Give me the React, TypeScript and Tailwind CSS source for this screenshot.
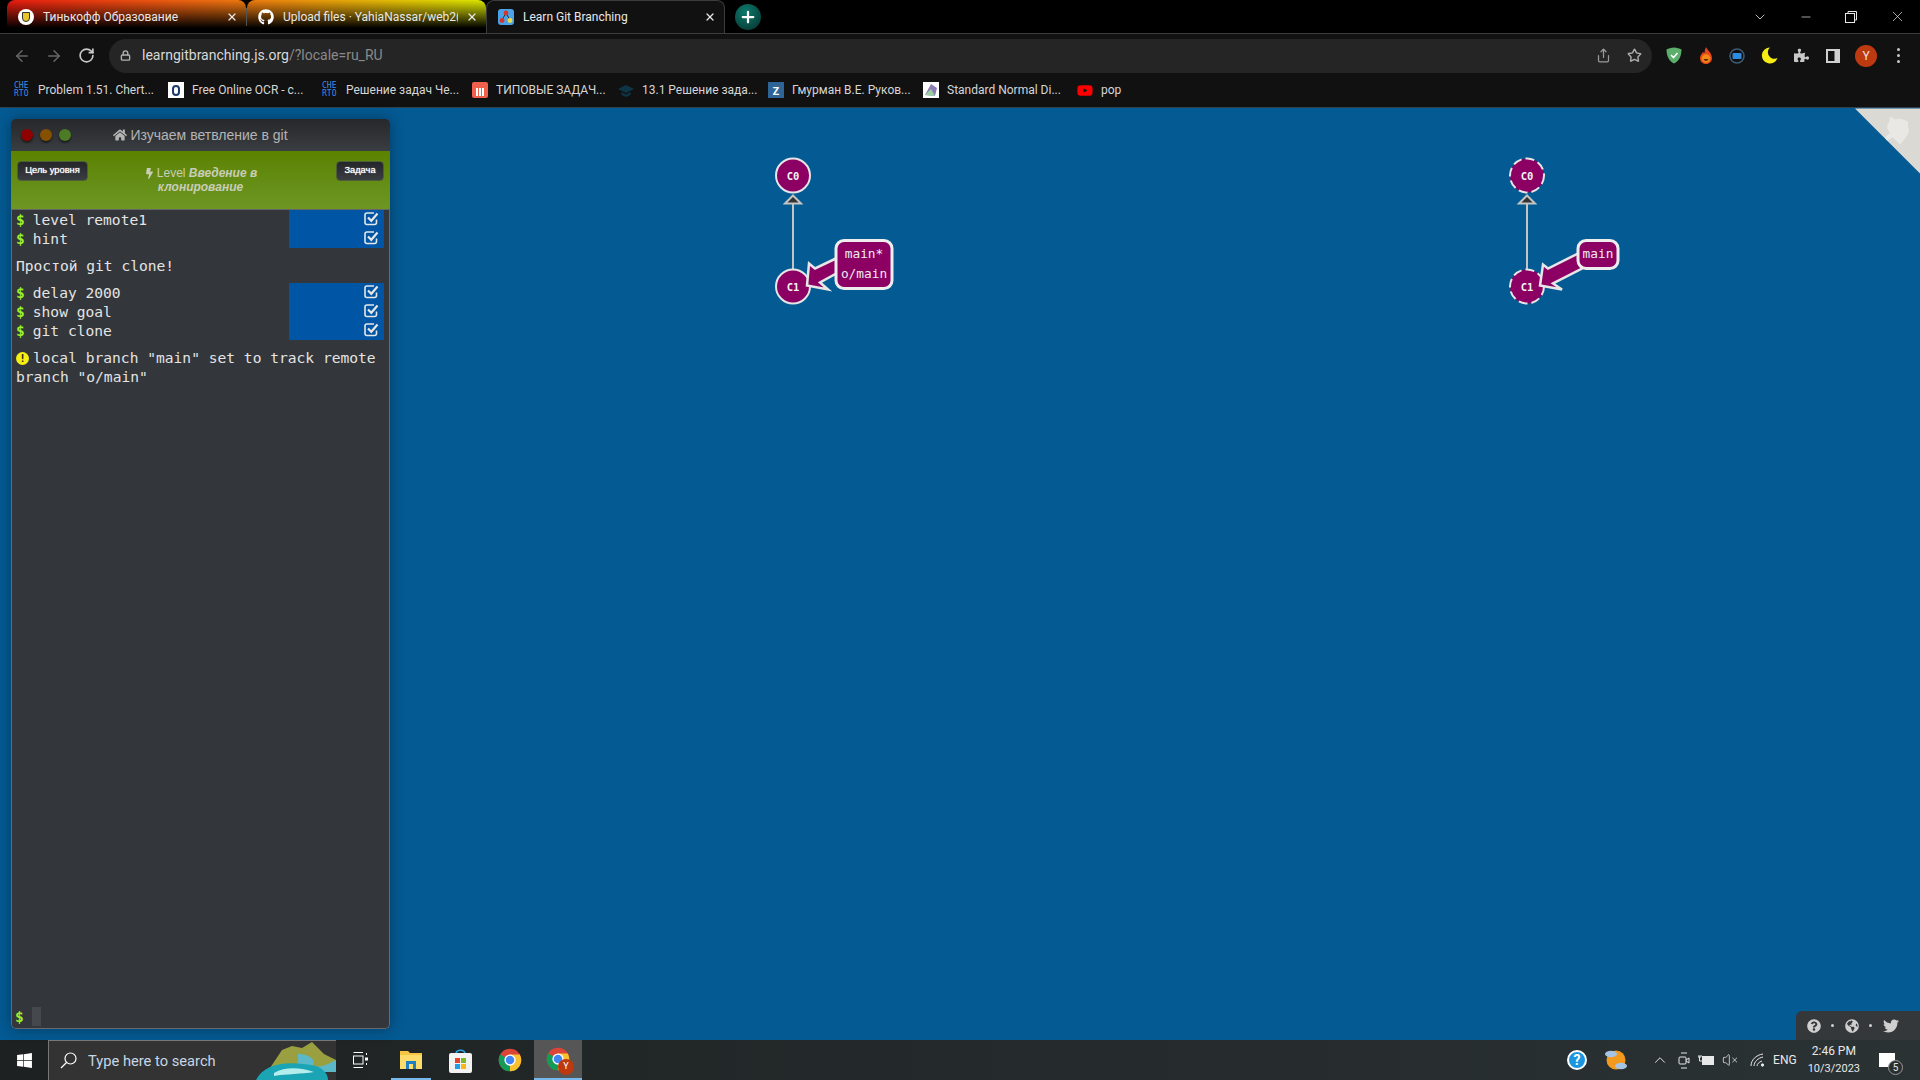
import React from "react";
import { FaBolt, FaGithub, FaGlobeAmericas, FaHome, FaPuzzlePiece, FaQuestionCircle, FaTwitter, FaWindows, FaYoutube } from "react-icons/fa";
import { ArrowLeft, ArrowRight, ChevronDown, ChevronUp, Lock, Minus, Plus, RotateCw, Share, Star, VolumeX, X } from "lucide-react";

const ui = "font-['Roboto','Noto_Sans',sans-serif]";
const mono = "font-['DejaVu_Sans_Mono',monospace]";

const ChromeLogo = ({ size = 30 }: { size?: number }) => (
  <svg width={size} height={size} viewBox="0 0 32 32">
    <circle cx="16" cy="16" r="15" fill="#db4437" />
    <path d="M16 16 L3 23.5 A15 15 0 0 1 3 8.5 Z" fill="#0f9d58" />
    <path d="M16 16 L3 23.5 A15 15 0 0 0 16 31 A15 15 0 0 0 29 23.5 Z" fill="#0f9d58" />
    <path d="M16 16 L16 31 A15 15 0 0 0 31 16 A15 15 0 0 0 29 8.5 L16 8.5 Z" fill="#fbc02d" />
    <circle cx="16" cy="16" r="7.5" fill="#fff" />
    <circle cx="16" cy="16" r="5.7" fill="#4285f4" />
  </svg>
);

const CherIcon = () => (
  <span className={`flex w-4 h-4 flex-col text-[8px] leading-[8px] text-[#3b8ce0] ${mono}`}>
    <span>CHE</span>
    <span>RTO</span>
  </span>
);

const CheckBox = () => (
  <svg width="15" height="15" viewBox="0 0 15 15" fill="none" stroke="#e6e6e6">
    <path d="M12.5 8.5 V11.5 A2 2 0 0 1 10.5 13.5 H3 A2 2 0 0 1 1 11.5 V4 A2 2 0 0 1 3 2 H10" strokeWidth="1.6" />
    <path d="M4 6.5 L7.3 9.8 L13.5 2.5" strokeWidth="2.2" />
  </svg>
);

const Tab = ({ title, icon, bg, active }: { title: string; icon: React.ReactNode; bg: string; active?: boolean }) => (
  <div className={`flex w-[239px] h-[33px] shrink-0 items-center rounded-t-[8px] pl-[11px] pr-[8px] ${bg} ${active ? "border border-b-0 border-[#3c3c3c]" : ""}`}>
    <span className="flex w-4 h-4 shrink-0 items-center justify-center">{icon}</span>
    <span className={`ml-[9px] flex-1 overflow-hidden whitespace-nowrap text-[12px] text-[#e8e8e8] ${ui}`}>{title}</span>
    <X size={12} strokeWidth={2.5} className="ml-2 shrink-0 text-[#e8e8e8]" />
  </div>
);

const bookmarks: { label: string; icon: React.ReactNode; w: string }[] = [
  { label: "Problem 1.51. Chert...", icon: <CherIcon />, w: "w-[154px]" },
  { label: "Free Online OCR - с...", icon: <span className="flex w-4 h-4 items-center justify-center bg-white"><span className="w-[8px] h-[11px] rounded-full border-2 border-[#1d3a6e]" /></span>, w: "w-[154px]" },
  { label: "Решение задач Че...", icon: <CherIcon />, w: "w-[150px]" },
  { label: "ТИПОВЫЕ ЗАДАЧ...", icon: <span className="flex w-4 h-4 items-end justify-center gap-px rounded-[2px] bg-[#f0604c] pb-[2px]"><span className="w-[2px] h-[8px] bg-white" /><span className="w-[2px] h-[8px] bg-white" /><span className="w-[2px] h-[8px] bg-white" /></span>, w: "w-[146px]" },
  { label: "13.1 Решение зада...", icon: <svg width="16" height="16" viewBox="0 0 16 16"><path d="M8 3 L16 7 L8 11 L0 7 Z M3.5 10 L8 12.5 L12.5 10 L12.5 13 L8 15 L3.5 13 Z" fill="#0e3446" /></svg>, w: "w-[150px]" },
  { label: "Гмурман В.Е. Руков...", icon: <span className="flex w-4 h-4 items-center justify-center bg-[#2f6496] text-[11px] font-bold leading-none text-white">Z</span>, w: "w-[155px]" },
  { label: "Standard Normal Di...", icon: <svg width="16" height="16" viewBox="0 0 16 16"><rect width="16" height="16" fill="#fff" /><path d="M2 13 L8 2 L14 6 L12 14 Z" fill="#8d7fb5" /><path d="M2 13 L8 7 L12 14 Z" fill="#9ad0a4" /></svg>, w: "w-[154px]" },
  { label: "pop", icon: <FaYoutube size={17} className="text-[#f00]" />, w: "" },
];

const TitleBar = () => (
  <div className="flex h-[33px] items-center bg-black pl-[7px]">
    <Tab title="Тинькофф Образование" bg="bg-[linear-gradient(to_bottom,transparent,#000_85%),linear-gradient(to_right,#e81c10,#ee7a10)]"
      icon={<span className="flex w-4 h-4 items-center justify-center rounded-full bg-white"><span className="w-[8px] h-[10px] rounded-b-full bg-[#e8c42a] border border-[#333]" /></span>} />
    <span className="w-px h-[18px] bg-[#555] shrink-0" />
    <Tab title="Upload files · YahiaNassar/web2(" bg="bg-[linear-gradient(to_bottom,transparent,#000_85%),linear-gradient(to_right,#ee7a10,#dbe800)]"
      icon={<FaGithub size={16} className="text-white" />} />
    <Tab title="Learn Git Branching" bg="bg-[#111]" active
      icon={<svg width="16" height="16" viewBox="0 0 16 16"><rect width="16" height="16" rx="3" fill="#4aa3e8" /><path d="M8 4 L4 11 M8 4 L12 11" stroke="#333" strokeWidth="1" /><circle cx="8" cy="4" r="2.4" fill="#d8352a" /><circle cx="4" cy="11.5" r="2.4" fill="#d8352a" /><circle cx="12" cy="11.5" r="2.4" fill="#f2dc3c" /></svg>} />
    <span className="ml-[10px] flex w-[26px] h-[26px] items-center justify-center rounded-full bg-[radial-gradient(circle_at_40%_30%,#0c7a6c,#06302c)]">
      <Plus size={18} strokeWidth={3} className="text-white" />
    </span>
    <div className="ml-auto flex items-center text-[#e8e8e8]">
      <ChevronDown size={16} strokeWidth={1.2} className="mr-[31px]" />
      <Minus size={14} strokeWidth={1.2} className="mr-[32px]" />
      <svg width="12" height="12" viewBox="0 0 12 12" fill="none" stroke="currentColor" className="mr-[32px]"><rect x="0.5" y="2.5" width="9" height="9" /><path d="M3 2.5 V0.5 H11.5 V9 H9.5" /></svg>
      <X size={17} strokeWidth={1} className="mr-[14px]" />
    </div>
  </div>
);

const Toolbar = () => (
  <div className="flex h-[44px] items-center border-t border-[#3c3c3c] bg-[#111] pl-[13px]">
    <ArrowLeft size={18} className="text-[#666]" />
    <ArrowRight size={18} className="ml-[14px] text-[#666]" />
    <RotateCw size={17} strokeWidth={2.4} className="ml-[15px] text-[#c8c8c8]" />
    <div className="ml-[14px] flex w-[1543px] h-[34px] items-center rounded-full bg-[#252525] pl-[11px]">
      <Lock size={11} strokeWidth={3} className="text-[#b0b0b0]" />
      <span className={`ml-[11px] text-[14px] text-[#d8d8d8] ${ui}`}>learngitbranching.js.org<span className="text-[#8a8a8a]">/?locale=ru_RU</span></span>
      <Share size={15} className="ml-auto text-[#9a9a9a]" />
      <Star size={15} strokeWidth={2.2} className="ml-[16px] mr-[10px] text-[#b0b0b0]" />
    </div>
    <div className="ml-[14px] flex items-center">
      <svg width="16" height="17" viewBox="0 0 16 17"><path d="M8 0.5 C5 0.5 2.5 1.5 0.5 2.5 C0.5 9 3 14 8 16.5 C13 14 15.5 9 15.5 2.5 C13.5 1.5 11 0.5 8 0.5 Z" fill="#5cae6b" /><path d="M5 8 L7.5 10.5 L11.5 6" stroke="#fff" strokeWidth="1.6" fill="none" /></svg>
      <svg width="14" height="17" viewBox="0 0 14 17" className="ml-[17px]"><path d="M7 0 C8 3 13 6 13 11 C13 14.5 10.5 17 7 17 C3.5 17 1 14.5 1 11 C1 8 3 7 4 5 C5 6 5.5 6 5.5 6 C5.5 4 6 2 7 0 Z" fill="#e8471a" /><circle cx="7" cy="11.5" r="4.3" fill="#f08a18" /><path d="M4.5 12 A2.6 2.6 0 0 0 9.5 12 Z" fill="#6a2a0a" /></svg>
      <svg width="16" height="16" viewBox="0 0 16 16" fill="none" className="ml-[16px]"><circle cx="8" cy="8" r="7" stroke="#3f5a72" strokeWidth="1.5" /><rect x="3.5" y="5" width="9" height="6" rx="1" fill="#2f8be0" /></svg>
      <svg width="17" height="17" viewBox="0 0 17 17" className="ml-[16px]"><path d="M9 0.5 A8 8 0 1 0 16.5 11 A6.5 6.5 0 0 1 9 0.5 Z" fill="#f6ec14" /></svg>
      <FaPuzzlePiece size={15} className="ml-[16px] text-[#c8c8c8]" />
      <svg width="14" height="14" viewBox="0 0 14 14" className="ml-[17px]"><rect width="14" height="14" fill="#d0d0d0" /><rect x="2" y="2" width="6.5" height="10" fill="#111" /></svg>
      <span className={`ml-[15px] flex w-[22px] h-[22px] items-center justify-center rounded-full bg-[#bd3a10] text-[12px] text-[#f0e0d8] ${ui}`}>Y</span>
      <span className="ml-[20px] flex flex-col gap-[3px]">
        <span className="w-[3px] h-[3px] rounded-full bg-[#c8c8c8]" />
        <span className="w-[3px] h-[3px] rounded-full bg-[#c8c8c8]" />
        <span className="w-[3px] h-[3px] rounded-full bg-[#c8c8c8]" />
      </span>
    </div>
  </div>
);

const BookmarksBar = () => (
  <div className="flex h-[31px] items-center border-b border-[#30404c] bg-[#111] pb-[4px] pl-[14px]">
    {bookmarks.map((b) => (
      <div key={b.label} className={`flex items-center gap-[8px] whitespace-nowrap ${b.w}`}>
        <span className="flex w-4 h-4 shrink-0 items-center justify-center">{b.icon}</span>
        <span className={`text-[12px] text-[#d6d6d6] ${ui}`}>{b.label}</span>
      </div>
    ))}
  </div>
);

const Cmd = ({ text }: { text: string }) => (
  <div className="flex h-[19px] items-center pl-[4px]">
    <span className="font-bold text-[#9bf02c]">$</span>
    <span className="ml-[8px] flex-1 whitespace-nowrap">{text}</span>
    <span className="flex w-[95px] h-[19px] items-center justify-end bg-[#0056a5] pb-[2px] pr-[5px]">
      <CheckBox />
    </span>
  </div>
);

const Terminal = () => (
  <div className="flex w-[379px] h-[910px] shrink-0 flex-col overflow-hidden rounded-[5px] shadow-[0_0_14px_rgba(0,0,0,0.35)]">
    <div className="relative flex h-[32px] items-center justify-center bg-gradient-to-b from-[#26282b] to-[#3a3d41]">
      <div className="absolute left-[10px] top-[10px] flex gap-[7px]">
        <span className="w-[12px] h-[12px] rounded-full bg-[#8f0000] shadow-[0_2px_2px_rgba(0,0,0,0.5)]" />
        <span className="w-[12px] h-[12px] rounded-full bg-[#855000] shadow-[0_2px_2px_rgba(0,0,0,0.5)]" />
        <span className="w-[12px] h-[12px] rounded-full bg-[#4c7a25] shadow-[0_2px_2px_rgba(0,0,0,0.5)]" />
      </div>
      <span className="flex items-center gap-[3px] font-['Liberation_Sans',sans-serif] text-[14px] text-[#b4b4b4]">
        <FaHome size={14} />Изучаем ветвление в git
      </span>
    </div>
    <div className="grid h-[58px] grid-cols-[1fr_190px_1fr] items-start bg-gradient-to-b from-[#5c8200] to-[#6c9722] px-[6px] pt-[10px] font-['Liberation_Sans',sans-serif]">
      <span className="flex h-[20px] w-[71px] items-center justify-center rounded-[4px] border border-[#4c5f38] bg-gradient-to-b from-[#24262a] to-[#3a3d42] text-[9.3px] text-white [text-shadow:0_0_1px_#fff]">Цель уровня</span>
      <span className="mt-[5px] text-center text-[12px] font-bold leading-[14px] text-[#c9cdb8]">
        <FaBolt size={11} className="mr-[2px] inline" /><span className="font-normal">Level</span> <em>Введение в клонирование</em>
      </span>
      <span className="flex h-[20px] w-[48px] items-center justify-center justify-self-end rounded-[4px] border border-[#4c5f38] bg-gradient-to-b from-[#24262a] to-[#3a3d42] text-[9.3px] text-white [text-shadow:0_0_1px_#fff]">Задача</span>
    </div>
    <div className={`flex flex-1 flex-col rounded-b-[5px] border border-t-[#666] border-[#6a6a6a] bg-[#33363a] text-[14.6px] leading-[19px] text-[#e4e4e4] ${mono}`}>
      <div className="pr-[5px]">
        <Cmd text="level remote1" />
        <Cmd text="hint" />
      </div>
      <p className="mt-[8px] pl-[4px]">Простой git clone!</p>
      <div className="mt-[8px] pr-[5px]">
        <Cmd text="delay 2000" />
        <Cmd text="show goal" />
        <Cmd text="git clone" />
      </div>
      <p className="mt-[8px] pl-[4px]">
        <span className="relative top-[-1px] mr-[4px] inline-flex w-[13px] h-[13px] items-center justify-center rounded-full bg-[#f6ef14] align-middle text-[11px] font-bold leading-none text-[#222]">!</span>
        local branch "main" set to track remote branch "o/main"
      </p>
      <div className="mt-auto flex items-center pb-[2px] pl-[3px]">
        <span className="font-bold text-[#9bf02c]">$</span>
        <span className="ml-[8px] w-[9px] h-[19px] bg-[#45484c]" />
      </div>
    </div>
  </div>
);

const Node = ({ x, y, label, dashed }: { x: number; y: number; label: string; dashed?: boolean }) => (
  <g>
    <circle cx={x} cy={y} r={17} fill="#8c0064" stroke="#e6e6e6" strokeWidth={2} strokeDasharray={dashed ? "9 4" : undefined} />
    <text x={x} y={y + 4} textAnchor="middle" fontFamily="DejaVu Sans Mono, monospace" fontWeight="bold" fontSize="10.5" fill="#f2f2f2">{label}</text>
  </g>
);

const Edge = ({ x }: { x: number }) => (
  <g>
    <line x1={x} y1={203} x2={x} y2={270} stroke="#c4c4c4" strokeWidth={2} />
    <path d={`M${x} 195 L${x + 8} 203 L${x - 8} 203 Z`} fill="#333" stroke="#c4c4c4" strokeWidth={2} />
  </g>
);

// svg sits on top of the blue area, so y is page y minus the 108px browser chrome
const Graph = () => (
  <svg className="absolute inset-0" width="1920" height="932" viewBox="0 107.5 1920 932">
    <Edge x={793} />
    <Node x={793} y={175} label="C0" />
    <Node x={793} y={286} label="C1" />
    <path d="M838 257 L815 268 L809 263 L807 285 L828 289 L820 282 L838 272 Z" fill="#8c0064" stroke="#e6e6e6" strokeWidth={2.5} />
    <rect x="836" y="240" width="56" height="48" rx="8" fill="#8c0064" stroke="#ededed" strokeWidth={3} />
    <text x="864" y="257.5" textAnchor="middle" fontFamily="DejaVu Sans Mono, monospace" fontSize="12.8" fill="#ececec">main*</text>
    <text x="864" y="277.5" textAnchor="middle" fontFamily="DejaVu Sans Mono, monospace" fontSize="12.8" fill="#ececec">o/main</text>

    <Edge x={1527} />
    <Node x={1527} y={175} label="C0" dashed />
    <Node x={1527} y={286} label="C1" dashed />
    <path d="M1580 252 L1548 268 L1543 264 L1540 285 L1562 289 L1553 283 L1582 268 Z" fill="#8c0064" stroke="#e6e6e6" strokeWidth={2.5} />
    <rect x="1578" y="240" width="40" height="28" rx="8" fill="#8c0064" stroke="#ededed" strokeWidth={3} />
    <text x="1598" y="257.5" textAnchor="middle" fontFamily="DejaVu Sans Mono, monospace" fontSize="12.8" fill="#ececec">main</text>

    <path d="M1855 108 H1920 V173 Z" fill="#dbd9d4" />
    <path d="M1890 132 C1886 128 1887 124 1889 122 L1890 116 L1895 119 C1898 118 1901 118 1903 119 L1908 121 L1908 126 C1910 130 1908 135 1905 138 L1900 144 L1893 137 L1887 140 L1885 137 Z" fill="#e9e8e4" />
  </svg>
);

const HelpBar = () => (
  <div className="absolute bottom-0 right-0 flex h-[29px] w-[124px] items-center rounded-tl-[6px] bg-[#35383b] pl-[11px] text-[#cfcfcf]">
    <FaQuestionCircle size={14} />
    <span className="ml-[10px] w-[3px] h-[3px] rounded-full bg-[#cfcfcf]" />
    <FaGlobeAmericas size={14} className="ml-[11px]" />
    <span className="ml-[10px] w-[3px] h-[3px] rounded-full bg-[#cfcfcf]" />
    <FaTwitter size={16} className="ml-[11px]" />
  </div>
);

const Taskbar = () => (
  <div className={`flex h-[40px] items-stretch bg-gradient-to-r from-[#1d2122] to-[#2b3233] ${ui}`}>
    <span className="flex w-[48px] items-center justify-center">
      <FaWindows size={17} className="text-white" />
    </span>
    <div className="relative flex w-[288px] items-center overflow-hidden border-l border-t border-[#777] bg-[#333] pl-[11px]">
      <svg width="17" height="17" viewBox="0 0 17 17" fill="none" stroke="#fff" strokeWidth="1.2"><circle cx="10.5" cy="6.5" r="5.5" /><path d="M6.5 10.5 L1 16" /></svg>
      <span className="ml-[11px] pt-[1px] text-[14.7px] text-[#c6d6e6]">Type here to search</span>
      <svg width="80" height="40" viewBox="0 0 80 40" className="absolute bottom-0 right-0">
        <path d="M14 28 L26 10 L36 6 L46 8 L56 2 L68 14 L80 20 V30 H20 Z" fill="#9aa040" />
        <path d="M42 14 C52 14 62 20 56 26 C66 28 72 24 80 20 V32 H42 Z" fill="#5ab8c8" />
        <path d="M0 40 C8 24 30 20 60 26 C70 30 72 36 72 40 Z" fill="#1aa4b4" />
        <path d="M18 33 C30 26 46 28 58 32 C46 34 30 34 18 36 Z" fill="#b5ecec" />
      </svg>
    </div>
    <span className="flex w-[48px] items-center justify-center">
      <svg width="16" height="16" viewBox="0 0 16 16" fill="none" stroke="#fff"><path d="M1.5 0.5 H11 M1.5 15.5 H11" /><rect x="1.5" y="4" width="9.5" height="8" /><rect x="13.5" y="6" width="2" height="2" fill="#fff" /><path d="M14.5 1 V3 M14.5 11 V13" /></svg>
    </span>
    <span className="ml-[7px] flex w-[40px] items-center justify-center border-b-2 border-[#76b9ed]">
      <svg width="22" height="20" viewBox="0 0 22 20"><path d="M0 2 H8 L10 4 H22 V20 H0 Z" fill="#f4c542" /><path d="M0 6 H22 V20 H0 Z" fill="#fbdc6a" /><path d="M6 20 V12 H16 V20 H13 V15 H9 V20 Z" fill="#1f7fc4" /></svg>
    </span>
    <span className="ml-[4px] flex w-[50px] items-center justify-center">
      <svg width="23" height="25" viewBox="0 0 23 25"><path d="M7 6 C7 1 16 1 16 6" fill="none" stroke="#2aa4e8" strokeWidth="1.6" /><rect y="5" width="23" height="20" rx="2" fill="#f2f2f2" /><rect x="6" y="10" width="5" height="5" fill="#e8432a" /><rect x="12" y="10" width="5" height="5" fill="#7cba2a" /><rect x="6" y="16" width="5" height="5" fill="#1ea0e8" /><rect x="12" y="16" width="5" height="5" fill="#fbb814" /></svg>
    </span>
    <span className="flex w-[49px] items-center justify-center">
      <ChromeLogo size={24} />
    </span>
    <span className="relative flex w-[48px] items-center justify-center border-b-2 border-[#76b9ed] bg-[#565656]">
      <ChromeLogo size={24} />
      <span className="absolute bottom-[3px] right-[8px] flex w-[16px] h-[16px] items-center justify-center rounded-full bg-[#bd3a10] text-[9px] text-white">Y</span>
    </span>
    <div className="ml-auto flex items-center text-[#e8e8e8]">
      <span className="relative flex w-[20px] h-[20px] items-center justify-center rounded-full border-2 border-white bg-[#1a96e0] text-[14px] font-bold text-white">?</span>
      <svg width="24" height="24" viewBox="0 0 24 24" className="ml-[17px]"><circle cx="12" cy="12" r="9.5" fill="#f39a1e" /><ellipse cx="7" cy="6" rx="6" ry="3.2" fill="#a5c4e4" /><ellipse cx="17" cy="18" rx="6" ry="3.2" fill="#a5c4e4" /></svg>
      <ChevronUp size={18} strokeWidth={1.3} className="ml-[23px]" />
      <svg width="12" height="17" viewBox="0 0 12 17" fill="none" stroke="currentColor" className="ml-[9px]"><path d="M3 1 H9 M3 16 H9" /><rect x="1" y="5" width="7" height="7" rx="1" /><path d="M8 8 L11 6 V11 L8 9" /></svg>
      <svg width="16" height="12" viewBox="0 0 16 12" className="ml-[8px]" fill="none" stroke="currentColor"><rect x="4.5" y="2.5" width="11" height="8" fill="currentColor" /><path d="M0 3 H3 M1 1 V3 M3 1 V3 M1.5 3 V7 H4" /></svg>
      <VolumeX size={16} strokeWidth={1.2} className="ml-[8px]" />
      <svg width="16" height="14" viewBox="0 0 16 14" fill="none" stroke="currentColor" className="ml-[12px]"><path d="M1 13 C1 7 6 2 13 1 M4 13 C4 9 8 5 13 4 M7 13 C7 11 9 9 12 8" /><circle cx="12.5" cy="12" r="1.2" fill="currentColor" /></svg>
      <span className="ml-[7px] text-[12px]">ENG</span>
      <div className="ml-[11px] flex flex-col items-center text-[12px] leading-[17px]">
        <span>2:46 PM</span>
        <span className="text-[11px]">10/3/2023</span>
      </div>
      <span className="relative ml-[19px] mr-[25px] flex w-[16px] h-[14px] items-center justify-center bg-white">
        <span className="absolute -bottom-[8px] -right-[8px] flex w-[15px] h-[15px] items-center justify-center rounded-full border border-[#999] bg-[#2a3031] text-[10px]">5</span>
      </span>
    </div>
  </div>
);

const App: React.FC = () => {
  return (
    <div className="flex w-[1920px] h-[1080px] flex-col overflow-hidden bg-black">
      <TitleBar />
      <Toolbar />
      <BookmarksBar />
      <div className="relative flex flex-1 bg-[#045a93] pl-[11px] pt-[11px]">
        <Graph />
        <Terminal />
        <HelpBar />
      </div>
      <Taskbar />
    </div>
  );
};

export default App;
